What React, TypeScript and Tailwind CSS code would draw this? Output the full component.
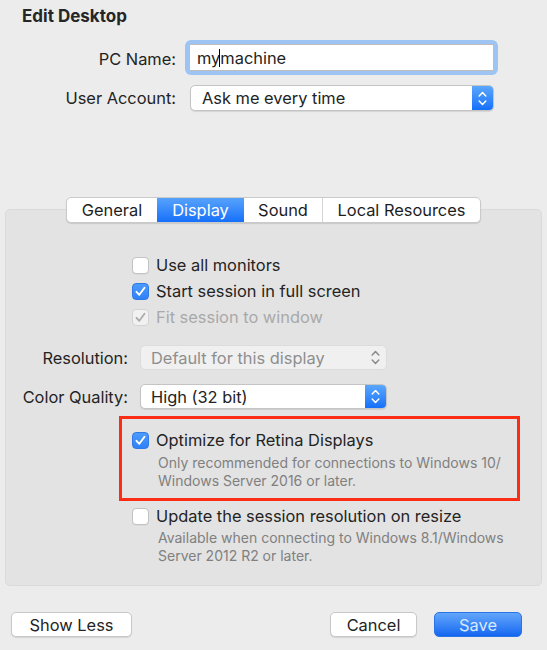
import { useState } from "react";

function Check({ on, disabled }: { on?: boolean; disabled?: boolean }) {
  if (disabled) {
    return (
      <span className="w-[17px] h-[17px] shrink-0 rounded-[4px] bg-[#f1f1f1] border border-[#d3d3d3] flex items-center justify-center">
        <svg width="11" height="11" viewBox="0 0 11 11">
          <path d="M1.5 5.8 L4.3 8.8 L9.5 1.8" fill="none" stroke="#ababab" strokeWidth="1.8" strokeLinecap="round" strokeLinejoin="round" />
        </svg>
      </span>
    );
  }
  if (on) {
    return (
      <span className="w-[17px] h-[17px] shrink-0 rounded-[4px] bg-gradient-to-b from-[#4c9bfb] to-[#2f81f7] border border-[#2f7ae6] flex items-center justify-center">
        <svg width="11" height="11" viewBox="0 0 11 11">
          <path d="M1.5 5.8 L4.3 8.8 L9.5 1.8" fill="none" stroke="#ffffff" strokeWidth="1.9" strokeLinecap="round" strokeLinejoin="round" />
        </svg>
      </span>
    );
  }
  return <span className="w-[17px] h-[17px] shrink-0 rounded-[4px] bg-white border border-[#c3c3c3] shadow-[0_0.5px_0.5px_rgba(0,0,0,0.08)]" />;
}

function Chevrons({ color }: { color: string }) {
  return (
    <svg width="9" height="15" viewBox="0 0 9 15">
      <path d="M1.2 5 L4.5 1.6 L7.8 5" fill="none" stroke={color} strokeWidth="1.5" strokeLinecap="round" strokeLinejoin="round" />
      <path d="M1.2 10 L4.5 13.4 L7.8 10" fill="none" stroke={color} strokeWidth="1.5" strokeLinecap="round" strokeLinejoin="round" />
    </svg>
  );
}

function Popup({ value, width, disabled }: { value: string; width: string; disabled?: boolean }) {
  if (disabled) {
    return (
      <div className={`${width} h-[25px] rounded-[5px] bg-[#f0f0f0] border border-[#dcdcdc] flex items-center`}>
        <span className="pl-[10px] flex-1 text-[#8e8e8e]">{value}</span>
        <span className="w-[21px] flex items-center justify-center">
          <Chevrons color="#8a8a8a" />
        </span>
      </div>
    );
  }
  return (
    <div className={`${width} h-[25px] rounded-[5px] bg-white border border-[#c4c4c4] shadow-[0_1px_1px_rgba(0,0,0,0.1)] flex items-center overflow-hidden`}>
      <span className="pl-[10px] flex-1 text-[#232323]">{value}</span>
      <span className="w-[21px] h-full bg-gradient-to-b from-[#5aa6fb] to-[#1370f9] flex items-center justify-center">
        <Chevrons color="#ffffff" />
      </span>
    </div>
  );
}

export default function App() {
  const [tab] = useState("Display");
  const tabs = [
    { name: "General", w: "w-[90px]" },
    { name: "Display", w: "w-[87px]" },
    { name: "Sound", w: "w-[78px]" },
    { name: "Local Resources", w: "w-[158px]" },
  ];

  return (
    <div
      className="w-[547px] h-[650px] bg-[#ececec] flex flex-col text-[16.4px] leading-[20px] text-[#232323]"
      style={{ fontFamily: "Inter, 'Noto Sans', sans-serif" }}
    >
      <h1 className="pl-[22px] pt-[6px] text-[17px] font-bold text-[#262626]">Edit Desktop</h1>

      {/* PC name */}
      <div className="mt-[14px] h-[35px] flex items-center">
        <span className="w-[176px] text-right pt-[2px]">PC Name:</span>
        <div className="ml-[9px] w-[313px] h-[35px] rounded-[6px] bg-[#9ec4f3] p-[4px]">
          <div className="h-full bg-white border border-[#bdbdbd] flex items-center pl-[7px]">
            <span>my</span>
            <span className="w-px h-[18px] bg-black -ml-px" />
            <span>machine</span>
          </div>
        </div>
      </div>

      {/* User account */}
      <div className="mt-[10px] h-[26px] flex items-center">
        <span className="w-[176px] text-right">User Account:</span>
        <div className="ml-[14px]">
          <div className="w-[304px] h-[26px] rounded-[5px] bg-white border border-[#c4c4c4] shadow-[0_1px_1px_rgba(0,0,0,0.1)] flex items-center overflow-hidden">
            <span className="pl-[11px] flex-1">Ask me every time</span>
            <span className="w-[21px] h-full bg-gradient-to-b from-[#5aa6fb] to-[#1370f9] flex items-center justify-center">
              <Chevrons color="#ffffff" />
            </span>
          </div>
        </div>
      </div>

      {/* Tabs */}
      <div className="mt-[86px] pl-[66px] flex relative z-10">
        <div className="flex h-[26px] rounded-[5px] border border-[#cacaca] bg-white shadow-[0_1px_1px_rgba(0,0,0,0.12)] overflow-hidden">
          {tabs.map((t, i) => (
            <div
              key={t.name}
              className={`${t.w} flex items-center justify-center ${
                t.name === tab
                  ? "bg-gradient-to-b from-[#56a2fb] to-[#1470fa] text-white"
                  : "text-[#1d1d1d]"
              } ${i > 0 && t.name !== tab && tabs[i - 1].name !== tab ? "border-l border-[#d6d6d6]" : ""}`}
            >
              {t.name}
            </div>
          ))}
        </div>
      </div>

      {/* Panel */}
      <div className="mx-[5px] -mt-[14px] h-[377px] rounded-[5px] bg-[#e3e3e3] border border-[#dadada] flex flex-col pt-[42px]">
        <div className="pl-[126px] h-[26px] flex items-center gap-[7px]">
          <Check />
          <span>Use all monitors</span>
        </div>
        <div className="pl-[126px] h-[26px] flex items-center gap-[7px]">
          <Check on />
          <span>Start session in full screen</span>
        </div>
        <div className="pl-[126px] h-[26px] flex items-center gap-[7px]">
          <Check disabled />
          <span className="text-[#a9a9a9]">Fit session to window</span>
        </div>

        <div className="mt-[15px] h-[25px] flex items-center">
          <span className="w-[122px] text-right">Resolution:</span>
          <div className="ml-[12px]">
            <Popup value="Default for this display" width="w-[247px]" disabled />
          </div>
        </div>

        <div className="mt-[14px] h-[25px] flex items-center">
          <span className="w-[122px] text-right">Color Quality:</span>
          <div className="ml-[12px]">
            <Popup value="High (32 bit)" width="w-[247px]" />
          </div>
        </div>

        <div className="mt-[7px] ml-[113px] w-[401px] h-[85px] border-[3px] border-[#fb2d17] pl-[10px] pt-[8px]">
          <div className="h-[26px] flex items-center gap-[7px]">
            <Check on />
            <span>Optimize for Retina Displays</span>
          </div>
          <p className="ml-[26px] mt-[1px] text-[14px] leading-[18px] text-[#808080]">
            Only recommended for connections to Windows 10/
            <br />
            Windows Server 2016 or later.
          </p>
        </div>

        <div className="mt-[2px] pl-[126px] h-[26px] flex items-center gap-[7px]">
          <Check />
          <span>Update the session resolution on resize</span>
        </div>
        <p className="pl-[152px] text-[14px] leading-[18px] text-[#808080]">
          Available when connecting to Windows 8.1/Windows
          <br />
          Server 2012 R2 or later.
        </p>
      </div>

      {/* Buttons */}
      <div className="mt-[26px] flex items-center pl-[11px] pr-[25px]">
        <button className="w-[121px] h-[25px] rounded-[5px] bg-white border border-[#c8c8c8] shadow-[0_1px_1px_rgba(0,0,0,0.1)] text-[#232323]">
          Show Less
        </button>
        <button className="ml-auto w-[87px] h-[25px] rounded-[5px] bg-white border border-[#c8c8c8] shadow-[0_1px_1px_rgba(0,0,0,0.1)] text-[#232323]">
          Cancel
        </button>
        <button className="ml-[17px] w-[88px] h-[25px] rounded-[5px] bg-gradient-to-b from-[#62a6fb] to-[#1366f0] border border-[#2a74e6] text-[#dbe8fd]">
          Save
        </button>
      </div>
    </div>
  );
}
